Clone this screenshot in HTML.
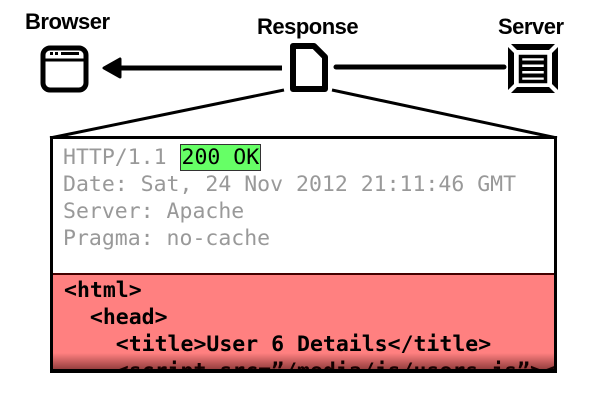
<!DOCTYPE html>
<html><head><style>
body{margin:0;width:600px;height:400px;background:#fff;position:relative;overflow:hidden;font-family:"Liberation Sans",sans-serif}
.lbl{position:absolute;font-weight:bold;font-size:22px;top:9px;color:#000;letter-spacing:-0.5px}
.box{position:absolute;left:50px;top:136px;width:501px;height:230px;border:3px solid #000;border-bottom:4px solid #000;background:#fff;overflow:hidden}
.mono{font-family:"DejaVu Sans Mono",monospace;font-size:21.5px;line-height:27px;white-space:pre}
.hdr{position:absolute;left:10px;top:5px;color:#999}
.ok{background:#66ff66;color:#000;border:1.5px solid #333;padding:0 1px}
.red{position:absolute;left:0;top:134px;width:100%;height:100px;background:#ff8080;border-top:2px solid #400}
.code{position:absolute;left:11px;top:2px;color:#000;font-weight:bold}
.fade{position:absolute;left:0;bottom:0;width:100%;height:22px;background:linear-gradient(rgba(0,0,0,0),rgba(50,0,0,0.7))}
</style></head><body>
<div class="lbl" style="left:25px">Browser</div>
<div class="lbl" style="left:257px;top:14px">Response</div>
<div class="lbl" style="left:498px;top:14px">Server</div>
<svg width="600" height="140" style="position:absolute;left:0;top:0">
<rect x="43" y="48" width="43" height="42" rx="7" fill="none" stroke="#000" stroke-width="5"/>
<line x1="45" y1="60" x2="84" y2="60" stroke="#000" stroke-width="3"/>
<rect x="50" y="52" width="3" height="3" fill="#000"/><rect x="55" y="52" width="3" height="3" fill="#000"/><rect x="61" y="52" width="18" height="3" fill="#000"/>
<line x1="116" y1="68" x2="282" y2="68" stroke="#000" stroke-width="5"/>
<path d="M104 68 L120 59 L120 77 Z" fill="#000" stroke="#000" stroke-width="3" stroke-linejoin="round"/>
<path d="M293 46 H314 L325 57 V89 H293 Z" fill="#fff" stroke="#000" stroke-width="6" stroke-linejoin="round"/>
<line x1="336" y1="67" x2="504" y2="67" stroke="#000" stroke-width="5" stroke-linecap="round"/>
<path d="M511 44 H555 L549 50 H517 Z" fill="#000"/>
<path d="M511 93 H555 L549 87 H517 Z" fill="#000"/>
<path d="M508 47 V90 L514 84 V53 Z" fill="#000"/>
<path d="M558 47 V90 L552 84 V53 Z" fill="#000"/>
<rect x="520.5" y="56.5" width="25" height="25" fill="none" stroke="#000" stroke-width="3.5"/>
<rect x="522" y="60.5" width="22" height="4" fill="#000"/><rect x="522" y="67" width="22" height="4" fill="#000"/><rect x="522" y="73.5" width="22" height="4" fill="#000"/>
<line x1="284" y1="90" x2="50" y2="138" stroke="#000" stroke-width="3"/>
<line x1="332" y1="90" x2="557" y2="138" stroke="#000" stroke-width="3"/>
</svg>
<div class="box">
<div class="mono hdr">HTTP/1.1 <span class="ok">200 OK</span>
Date: Sat, 24 Nov 2012 21:11:46 GMT
Server: Apache
Pragma: no-cache</div>
<div class="red"><div class="mono code">&lt;html&gt;
  &lt;head&gt;
    &lt;title&gt;User 6 Details&lt;/title&gt;
    &lt;script src=”/media/js/users.js”&gt;&lt;/script&gt;</div><div class="fade"></div></div>
</div>
</body></html>
